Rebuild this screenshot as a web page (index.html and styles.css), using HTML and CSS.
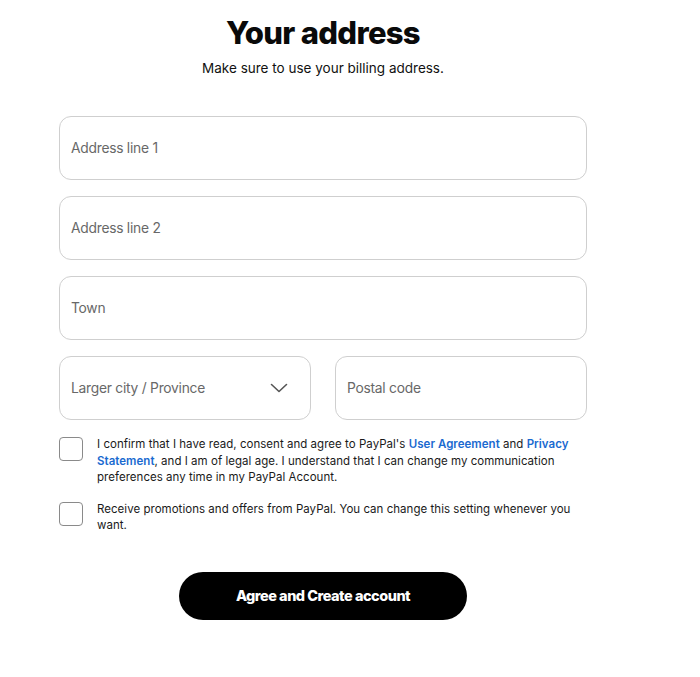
FILE: index.html
```html
<!DOCTYPE html>
<html>
<head>
<meta charset="utf-8">
<link rel="stylesheet" href="styles.css">
</head>
<body>
<main class="page">
  <h1 class="title">Your address</h1>
  <p class="subtitle">Make sure to use your billing address.</p>
  <div class="fields">
    <div class="field"><span class="placeholder">Address line 1</span></div>
    <div class="field"><span class="placeholder">Address line 2</span></div>
    <div class="field"><span class="placeholder">Town</span></div>
    <div class="row">
      <div class="field select">
        <span class="placeholder">Larger city / Province</span>
        <svg class="chevron" width="18" height="12" viewBox="0 0 18 12"><path d="M1.5 2.5 L9 9.5 L16.5 2.5" fill="none" stroke="#555" stroke-width="1.6" stroke-linecap="round" stroke-linejoin="round"/></svg>
      </div>
      <div class="field"><span class="placeholder">Postal code</span></div>
    </div>
  </div>
  <div class="checks">
    <label class="check">
      <span class="box"></span>
      <span class="check-text">I confirm that I have read, consent and agree to PayPal's <a class="link">User Agreement</a> and <a class="link">Privacy Statement</a>, and I am of legal age. I understand that I can change my communication preferences any time in my PayPal Account.</span>
    </label>
    <label class="check">
      <span class="box"></span>
      <span class="check-text">Receive promotions and offers from PayPal. You can change this setting whenever you want.</span>
    </label>
  </div>
  <div class="actions">
    <button class="btn">Agree and Create account</button>
  </div>
</main>
</body>
</html>
```
FILE: styles.css
```css
* { box-sizing: border-box; }
html, body { margin: 0; padding: 0; background: #fff; }
body { font-family: "Liberation Sans", Arial, sans-serif; color: #000; }
.page {
  width: 528px;
  margin-left: 59px;
  padding-top: 13px;
}
.title {
  margin: 0;
  text-align: center;
  font-family: Inter, "Noto Sans", sans-serif;
  font-weight: 800;
  font-size: 31px;
  letter-spacing: -0.7px;
  line-height: 40px;
  color: #0a0a0a;
}
.subtitle {
  margin: 6px 0 0;
  text-align: center;
  font-family: Inter, sans-serif;
  font-size: 13.5px;
  line-height: 18px;
  color: #111;
}
.fields {
  margin-top: 39px;
  display: flex;
  flex-direction: column;
  gap: 16px;
}
.field {
  height: 64px;
  border: 1px solid #cfcfcf;
  border-radius: 12px;
  display: flex;
  align-items: center;
  padding: 0 11px;
}
.placeholder {
  font-family: Inter, sans-serif;
  font-size: 13.8px;
  color: #686868;
  letter-spacing: -0.25px;
}
.row {
  display: grid;
  grid-template-columns: 252px 252px;
  gap: 24px;
}
.select { justify-content: space-between; padding-right: 22px; }
.chevron { display: block; }
.checks {
  margin-top: 16px;
  display: flex;
  flex-direction: column;
  gap: 15px;
}
.check {
  display: flex;
  align-items: flex-start;
  gap: 14px;
}
.box {
  flex: none;
  width: 24px;
  height: 24px;
  border: 1px solid #8a8a8a;
  border-radius: 4px;
  margin-top: 1px;
}
.check-text {
  font-family: Inter, sans-serif;
  font-size: 11.5px;
  line-height: 16.5px;
  letter-spacing: 0.03px;
  color: #1a1a1a;
}
.link { color: #1a6ad0; font-weight: 600; text-decoration: none; }
.actions {
  margin-top: 38px;
  display: flex;
  justify-content: center;
}
.btn {
  width: 288px;
  height: 48px;
  border: 0;
  border-radius: 24px;
  background: #000;
  color: #fff;
  font-family: Inter, sans-serif;
  font-weight: 800;
  font-size: 14.5px;
  letter-spacing: -0.5px;
}
```
